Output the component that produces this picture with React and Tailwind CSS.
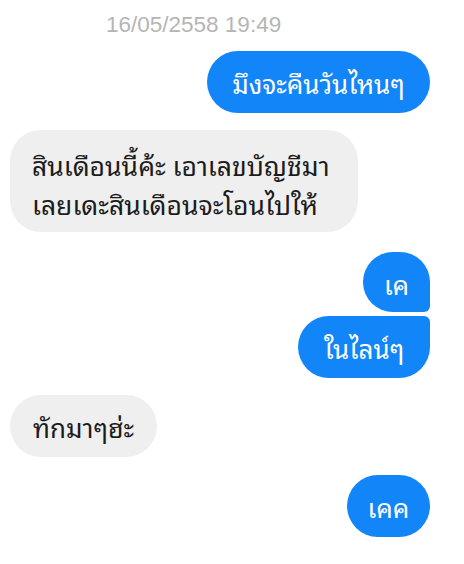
export default function App() {
  const thai = { fontFamily: '"Noto Sans Thai Looped", "Noto Sans Thai", "Noto Sans", Thonburi, sans-serif' };
  return (
    <div className="w-[464px] h-[564px] bg-white overflow-hidden flex flex-col">
      <div
        className="pt-[12px] pl-[106px] text-[22.5px] leading-[26px] text-[#b5b5b5]"
        style={{ fontFamily: '"Liberation Sans", Arial, sans-serif' }}
      >
        16/05/2558 19:49
      </div>
      <div className="flex flex-col pt-[13px]" style={thai}>
        <div className="flex justify-end pr-[34px]">
          <div className="h-[62px] w-[223px] rounded-[31px] bg-[#1285f8] text-white text-[26px] flex items-center justify-center">
            มึงจะคืนวันไหนๆ
          </div>
        </div>
        <div className="flex justify-start pl-[10px] mt-[17px]">
          <div className="h-[102px] w-[348px] rounded-[31px] bg-[#efefef] text-[#1c1c1c] text-[26.5px] leading-[39px] flex flex-col justify-center pl-[22px] pt-[6px]">
            <span>สินเดือนนี้ค้ะ เอาเลขบัญชีมา</span>
            <span>เลยเดะสินเดือนจะโอนไปให้</span>
          </div>
        </div>
        <div className="flex justify-end pr-[34px] mt-[20px]">
          <div className="h-[60px] w-[67px] rounded-[30px] rounded-br-[6px] bg-[#1285f8] text-white text-[26px] flex items-center justify-center pt-[2px]">
            เค
          </div>
        </div>
        <div className="flex justify-end pr-[34px] mt-[4px]">
          <div className="h-[62px] w-[132px] rounded-[31px] rounded-tr-[6px] bg-[#1285f8] text-white text-[26px] flex items-center justify-center">
            ในไลน์ๆ
          </div>
        </div>
        <div className="flex justify-start pl-[10px] mt-[17px]">
          <div className="h-[62px] w-[147px] rounded-[31px] bg-[#efefef] text-[#1c1c1c] text-[26px] flex items-center justify-center">
            ทักมาๆฮ่ะ
          </div>
        </div>
        <div className="flex justify-end pr-[34px] mt-[18px]">
          <div className="h-[62px] w-[83px] rounded-[31px] bg-[#1285f8] text-white text-[26px] flex items-center justify-center">
            เคค
          </div>
        </div>
      </div>
    </div>
  );
}
